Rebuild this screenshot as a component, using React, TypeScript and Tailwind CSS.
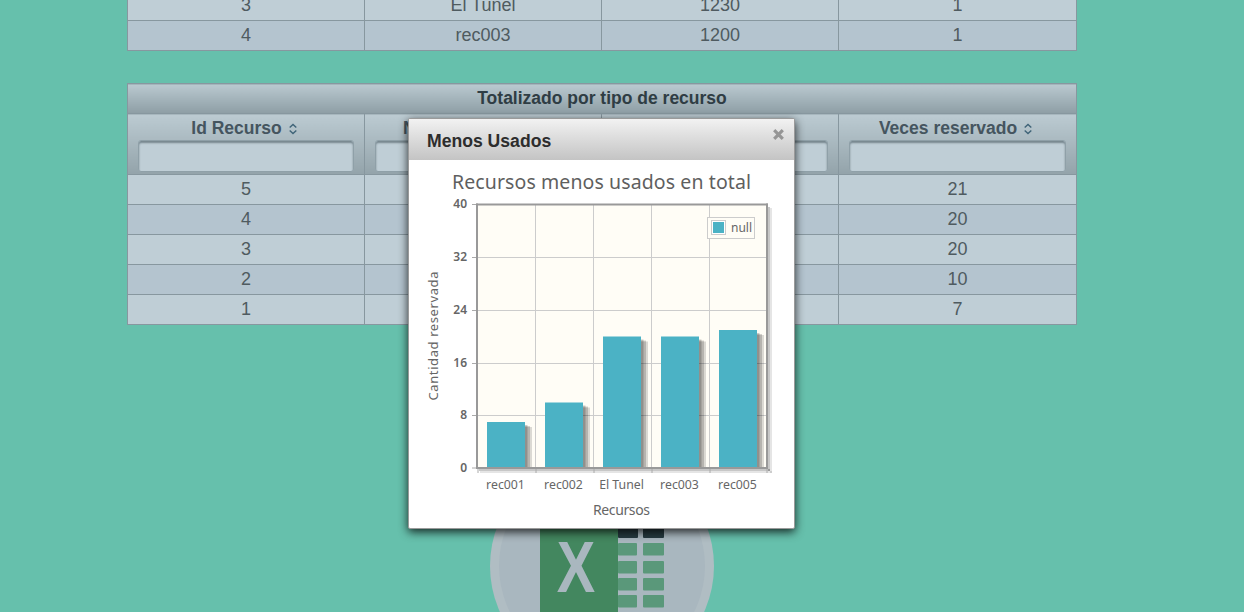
import React from "react";

const Sort = () => (
  <svg width="8" height="12" viewBox="0 0 8 12" className="inline-block ml-[7px] align-[-1px]" fill="none" stroke="#3f6478" strokeWidth="1.4">
    <path d="M0.7 4.6 L4 1.4 L7.3 4.6" />
    <path d="M0.7 7.4 L4 10.6 L7.3 7.4" />
  </svg>
);

const cell = "border border-[#87979f] h-[30px] p-0 text-center align-middle";

const Row = ({ r, i }: { r: (string | number)[]; i: number }) => (
  <tr className={i % 2 === 0 ? "bg-[#bfced6]" : "bg-[#b4c4cf]"}>
    {r.map((v, k) => (
      <td key={k} className={cell}>{v}</td>
    ))}
  </tr>
);

const Cols = () => (
  <colgroup>
    <col className="w-[237px]" />
    <col className="w-[237px]" />
    <col className="w-[237px]" />
    <col className="w-[238px]" />
  </colgroup>
);

const headers = ["Id Recurso", "Nombre Recurso", "Tiempo total", "Veces reservado"];
const rows2: (string | number)[][] = [
  [5, "rec005", 1500, 21],
  [4, "rec003", 1200, 20],
  [3, "El Tunel", 1230, 20],
  [2, "rec002", 700, 10],
  [1, "rec001", 500, 7],
];

const bars = [
  { x: 487, y: 422, l: "rec001" },
  { x: 545, y: 402.5, l: "rec002" },
  { x: 603, y: 336.5, l: "El Tunel" },
  { x: 661, y: 336.5, l: "rec003" },
  { x: 719, y: 330, l: "rec005" },
];

const yTicks: [string, number][] = [
  ["40", 204.5],
  ["32", 257.5],
  ["24", 310.5],
  ["16", 363.5],
  ["8", 415.5],
  ["0", 468],
];

const chartFont = { fontFamily: '"Noto Sans", "DejaVu Sans", sans-serif' };

const Chart = () => (
  <svg viewBox="409 160 385 368" width="385" height="368" className="block" style={chartFont}>
    <text x="601.5" y="189" textAnchor="middle" fontSize="19.5" fill="#5f5f5f" textLength="299">Recursos menos usados en total</text>
    <rect x="478" y="205" width="288" height="263" fill="#fffdf6" />
    <rect x="768" y="207" width="2" height="264" fill="#000" opacity="0.22" />
    <rect x="770" y="208" width="2" height="265" fill="#000" opacity="0.1" />
    <rect x="479" y="469" width="291" height="2" fill="#000" opacity="0.22" />
    <rect x="480" y="471" width="292" height="2" fill="#000" opacity="0.1" />
    {[535.5, 593.5, 651.5, 709.5].map((x) => (
      <line key={x} x1={x} x2={x} y1="205" y2="468" stroke="#cccccc" strokeWidth="1" />
    ))}
    {[257.5, 310.5, 363.5, 415.5].map((y) => (
      <line key={y} x1="478" x2="766" y1={y} y2={y} stroke="#cccccc" strokeWidth="1" />
    ))}
    {bars.map((b) => (
      <g key={b.x}>
        <rect x={b.x + 3} y={b.y + 3} width="37.5" height={467 - b.y - 3} fill="#000" opacity="0.2" />
        <rect x={b.x + 3} y={b.y + 4} width="40" height={467 - b.y - 4} fill="#000" opacity="0.17" />
        <rect x={b.x + 3} y={b.y + 5} width="42" height={467 - b.y - 5} fill="#000" opacity="0.14" />
        <rect x={b.x} y={b.y} width="38" height={468 - b.y} fill="#4bb2c5" />
        <text x={b.x + 18.5} y="489" textAnchor="middle" fontSize="12.3" fill="#666666">{b.l}</text>
      </g>
    ))}
    <rect x="476" y="203.5" width="292" height="2" fill="#999999" />
    <rect x="476" y="467" width="292" height="2" fill="#999999" />
    <rect x="476" y="203.5" width="2" height="265" fill="#999999" />
    <rect x="766" y="203.5" width="2" height="265" fill="#999999" />
    {yTicks.map(([t, y]) => (
      <g key={t}>
        <line x1="472" x2="476" y1={y} y2={y} stroke="#aaaaaa" />
        <text x="467" y={y + 3.5} textAnchor="end" fontSize="12" fontWeight="600" fill="#666666">{t}</text>
      </g>
    ))}
    {[478, 536, 594, 652, 710, 767].map((x) => (
      <line key={x} x1={x} x2={x} y1="469" y2="473" stroke="#aaaaaa" />
    ))}
    <text x="621.5" y="515" textAnchor="middle" fontSize="14" fill="#666666" textLength="57">Recursos</text>
    <text transform="translate(438 336) rotate(-90)" textAnchor="middle" fontSize="13" fill="#666666" textLength="129">Cantidad reservada</text>
    <rect x="707.5" y="217.5" width="47" height="21" fill="#fffdf6" stroke="#cccccc" />
    <rect x="711.5" y="220.5" width="14" height="14" fill="#ffffff" stroke="#cccccc" />
    <rect x="713" y="222" width="11" height="11" fill="#4bb2c5" />
    <text x="731" y="232" fontSize="12" fill="#666666">null</text>
  </svg>
);

const ExcelLogo = () => (
  <svg width="224" height="224" viewBox="0 0 224 224" className="block mx-auto mt-[129px]">
    <circle cx="112" cy="112" r="112" fill="#b0bdc3" />
    <circle cx="112" cy="112" r="103" fill="#a9b7bf" />
    <rect x="50" y="30" width="78" height="194" fill="#43875f" />
    <rect x="128" y="62" width="20" height="22" rx="1" fill="#263a40" />
    <rect x="153" y="62" width="21" height="22" rx="1" fill="#263a40" />
    {[89, 107, 124, 141].map((y) => (
      <g key={y} fill="#5a987a">
        <rect x="128" y={y} width="19" height="12.5" rx="1" />
        <rect x="153" y={y} width="21" height="12.5" rx="1" />
      </g>
    ))}
    <text transform="translate(86 138) scale(0.8 1)" textAnchor="middle" fontSize="72" fontWeight="700" fill="#a9b7bf" style={{ fontFamily: '"Liberation Sans", sans-serif' }}>X</text>
  </svg>
);

export default function App() {
  return (
    <div
      className="relative h-[612px] overflow-hidden bg-[#66c0ac] text-[18px] text-[#4f5b60]"
      style={{ fontFamily: '"Liberation Sans", Arial, sans-serif' }}
    >
      <div className="ml-[127px] w-[950px] -mt-[10px]">
        <table className="w-[949px] table-fixed border-collapse">
          <Cols />
          <tbody>
            <Row r={[3, "El Tunel", 1230, 1]} i={0} />
            <Row r={[4, "rec003", 1200, 1]} i={1} />
          </tbody>
        </table>

        <table className="mt-[32px] w-[949px] table-fixed border-collapse">
          <Cols />
          <thead>
            <tr>
              <th colSpan={4} className="h-[30px] border border-[#87979f] p-0 bg-gradient-to-b from-[#bac9d0] to-[#8e9ea5] text-[17.5px] font-bold text-[#2f3d44]">
                Totalizado por tipo de recurso
              </th>
            </tr>
            <tr>
              {headers.map((h) => (
                <th key={h} className="h-[61px] border border-[#87979f] p-0 align-top bg-gradient-to-b from-[#bccbd2] to-[#93a3aa] text-[17.5px] font-bold text-[#45555f]">
                  <div className="h-[26px] pr-[4px] leading-[29px] whitespace-nowrap">
                    {h}
                    <Sort />
                  </div>
                  <div className="mx-[10px] h-[32px] rounded-[3px] border border-[#8fa0a8] bg-[#bfced6] shadow-[inset_0_2px_2px_#76868e]" />
                </th>
              ))}
            </tr>
          </thead>
          <tbody>
            {rows2.map((r, i) => (
              <Row key={i} r={r} i={i} />
            ))}
          </tbody>
        </table>

        <ExcelLogo />
      </div>

      <div className="absolute left-[408px] top-[118px] w-[387px] h-[411px] rounded-[2px] border border-[#9a9a9a] bg-white shadow-[0_3px_10px_rgba(0,0,0,0.8)]">
        <div className="relative h-[41px] bg-gradient-to-b from-[#f2f2f2] to-[#c4c4c4] pl-[18px] leading-[44px] text-[17.6px] font-bold text-[#2d2d2d]">
          Menos Usados
          <svg width="11" height="11" viewBox="0 0 11 11" className="absolute right-[10px] top-[10px]" stroke="#959595" strokeWidth="3.2">
            <path d="M1.2 1.2 L9.8 9.8 M9.8 1.2 L1.2 9.8" />
          </svg>
        </div>
        <Chart />
      </div>
    </div>
  );
}
